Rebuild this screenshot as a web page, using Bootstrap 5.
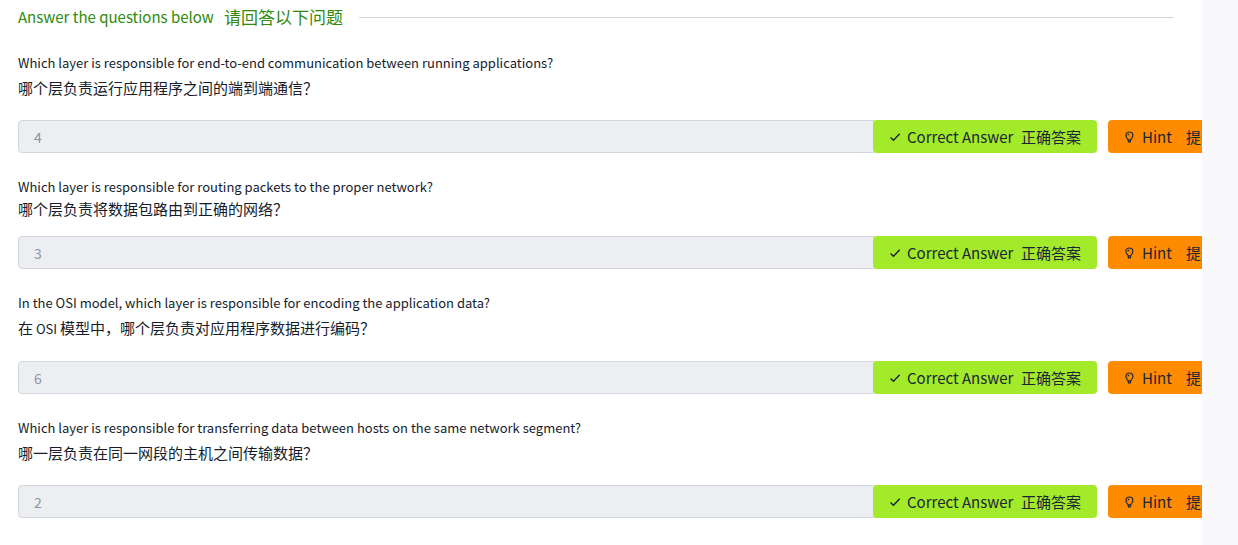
<!DOCTYPE html>
<html lang="en">
<head>
<meta charset="utf-8">
<meta name="viewport" content="width=device-width, initial-scale=1">
<title>Answer the questions below</title>
<link href="https://cdn.jsdelivr.net/npm/bootstrap@5.3.0/dist/css/bootstrap.min.css" rel="stylesheet">
<style>
  body { background: #f9f9fb; color: #151c2b; font-family: "Noto Sans CJK SC", sans-serif; }
  .task-panel { margin-right: 36px; padding: 4px 28px 0 18px; min-height: 100vh; }
  .task-title { font-size: 15px; line-height: 26px; color: #2f8a0d; margin-bottom: 21px; }
  .task-title .zh { font-size: 17px; margin-left: 10px; }
  .title-rule { height: 1px; background: #d5d5d8; }
  .question { margin-bottom: 22px; }
  .question-en { display: block; font-size: 13px; line-height: 24px; }
  .question-zh { display: block; font-size: 15px; line-height: 26px; margin-bottom: 19px; }
  .question-zh.tight { line-height: 20px; margin-bottom: 17px; }
  .question-zh .latin { font-size: 13px; }
  /* the answer row runs wider than the panel, which clips it */
  .answer-row { margin-right: -58px; }
  .answer-row .form-control { height: 33px; padding: 0 15px; font-size: 14px; color: #8c95a3; background: #edeef2; border-color: #d3d6de; border-radius: 4px; min-width: 0; }
  .answer-row .btn { height: 33px; padding: 0 16px; border: 0; border-radius: 4px; font-size: 15px; line-height: 33px; color: #1c2538; }
  .btn-correct, .btn-correct:hover { background: #a3ea2a; margin-left: -4px; width: 224px; }
  .btn-hint, .btn-hint:hover { background: #ff8b00; margin-left: 11px; width: 124px; }
  .btn svg { flex: none; }
  .btn-correct svg { margin-right: 6px; }
</style>
</head>
<body>
<main class="task-panel bg-white overflow-hidden">
  <h1 class="task-title d-flex align-items-center fw-normal">
    <span>Answer the questions below</span>
    <span class="zh">请回答以下问题</span>
    <span class="title-rule flex-grow-1 ms-3"></span>
  </h1>

  <svg class="d-none" aria-hidden="true">
    <symbol id="check" viewBox="0 0 12 12"><path d="M1.5 6.5 4.5 9.3 10.7 2.7" fill="none" stroke="currentColor" stroke-width="1.4"/></symbol>
    <symbol id="bulb" viewBox="0 0 10 12"><path d="M4 8.8C3.6 7.4 1.9 6.4 1.9 4.4a3.5 3.4 0 0 1 7 0C8.9 6.4 7.2 7.4 6.8 8.8L6.3 10.8H4.5Z M4 8.9H6.8 M3.9 4.6A1.6 1.6 0 0 1 5.4 3" fill="none" stroke="currentColor" stroke-width="1.2"/></symbol>
  </svg>

  <section class="question">
    <label for="a1" class="d-block"><span class="question-en">Which layer is responsible for end-to-end communication between running applications?</span><span class="question-zh">哪个层负责运行应用程序之间的端到端通信？</span></label>
    <div class="answer-row d-flex">
      <input id="a1" class="form-control" type="text" value="4" readonly>
      <button type="button" class="btn btn-correct d-flex align-items-center flex-shrink-0 text-nowrap"><svg width="12" height="12"><use href="#check"/></svg><span>Correct Answer</span><span class="ms-auto">正确答案</span></button>
      <button type="button" class="btn btn-hint d-flex align-items-center flex-shrink-0 text-nowrap"><svg width="10" height="12" class="me-2"><use href="#bulb"/></svg><span>Hint</span><span class="ms-auto">提示</span></button>
    </div>
  </section>

  <section class="question">
    <label for="a2" class="d-block"><span class="question-en">Which layer is responsible for routing packets to the proper network?</span><span class="question-zh tight">哪个层负责将数据包路由到正确的网络？</span></label>
    <div class="answer-row d-flex">
      <input id="a2" class="form-control" type="text" value="3" readonly>
      <button type="button" class="btn btn-correct d-flex align-items-center flex-shrink-0 text-nowrap"><svg width="12" height="12"><use href="#check"/></svg><span>Correct Answer</span><span class="ms-auto">正确答案</span></button>
      <button type="button" class="btn btn-hint d-flex align-items-center flex-shrink-0 text-nowrap"><svg width="10" height="12" class="me-2"><use href="#bulb"/></svg><span>Hint</span><span class="ms-auto">提示</span></button>
    </div>
  </section>

  <section class="question">
    <label for="a3" class="d-block"><span class="question-en">In the OSI model, which layer is responsible for encoding the application data?</span><span class="question-zh">在<span class="latin"> OSI </span>模型中，哪个层负责对应用程序数据进行编码？</span></label>
    <div class="answer-row d-flex">
      <input id="a3" class="form-control" type="text" value="6" readonly>
      <button type="button" class="btn btn-correct d-flex align-items-center flex-shrink-0 text-nowrap"><svg width="12" height="12"><use href="#check"/></svg><span>Correct Answer</span><span class="ms-auto">正确答案</span></button>
      <button type="button" class="btn btn-hint d-flex align-items-center flex-shrink-0 text-nowrap"><svg width="10" height="12" class="me-2"><use href="#bulb"/></svg><span>Hint</span><span class="ms-auto">提示</span></button>
    </div>
  </section>

  <section class="question">
    <label for="a4" class="d-block"><span class="question-en">Which layer is responsible for transferring data between hosts on the same network segment?</span><span class="question-zh">哪一层负责在同一网段的主机之间传输数据？</span></label>
    <div class="answer-row d-flex">
      <input id="a4" class="form-control" type="text" value="2" readonly>
      <button type="button" class="btn btn-correct d-flex align-items-center flex-shrink-0 text-nowrap"><svg width="12" height="12"><use href="#check"/></svg><span>Correct Answer</span><span class="ms-auto">正确答案</span></button>
      <button type="button" class="btn btn-hint d-flex align-items-center flex-shrink-0 text-nowrap"><svg width="10" height="12" class="me-2"><use href="#bulb"/></svg><span>Hint</span><span class="ms-auto">提示</span></button>
    </div>
  </section>
</main>
<script src="https://cdn.jsdelivr.net/npm/bootstrap@5.3.0/dist/js/bootstrap.bundle.min.js"></script>
</body>
</html>
